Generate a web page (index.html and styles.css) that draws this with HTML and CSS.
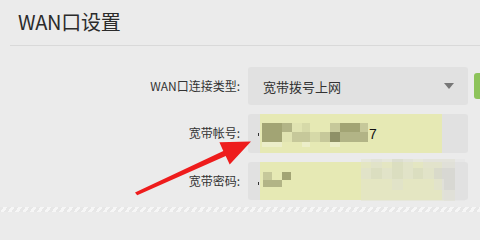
FILE: index.html
```
<!DOCTYPE html>
<html lang="zh-CN">
<head>
<meta charset="utf-8">
<title>WAN口设置</title>
<link rel="stylesheet" href="styles.css">
</head>
<body>
<div class="page">
  <header class="hd"><h1 class="title">WAN口设置</h1></header>
  <div class="form">
    <div class="row">
      <label class="lbl">WAN口连接类型:</label>
      <div class="box select"><span class="val">宽带拨号上网</span><span class="caret"></span></div>
      <div class="btn"></div>
    </div>
    <div class="row">
      <label class="lbl">宽带帐号:</label>
      <div class="box input">
        <div class="pad"><i class="cur"></i></div>
        <div class="fill">
          <div class="mosaic m-acc">
            <b class="d1"></b><b class="d1"></b><b class="m1"></b><b class="l2"></b><b class="l1"></b><b class="y"></b><b class="y"></b><b class="m2"></b><b class="d1"></b><b class="d1"></b><b class="m2"></b>
            <b class="d1"></b><b class="d1"></b><b class="l2"></b><b class="m2"></b><b class="m2"></b><b class="l1"></b><b class="m2"></b><b class="d2"></b><b class="m1"></b><b class="m1"></b><b class="m1"></b>
            <b class="f1"></b><b class="f1"></b><b class="y"></b><b class="y"></b><b class="f1"></b><b class="y"></b><b class="y"></b><b class="f1"></b><b class="y"></b><b class="y"></b><b class="y"></b>
          </div>
          <span class="seven">7</span>
        </div>
      </div>
      <div></div>
    </div>
    <div class="row">
      <label class="lbl">宽带密码:</label>
      <div class="box input">
        <div class="pad"><i class="cur cur2"></i></div>
        <div class="fill">
          <div class="mosaic m-pwd">
            <b class="m2"></b><b class="y"></b><b class="d1"></b>
            <b class="m1 span2"></b><b class="y"></b>
          </div>
        </div>
        <div class="ghost">
          <b class="g1"></b><b class="g2"></b><b class="g1"></b><b class="g3"></b><b class="g2"></b><b class="g1"></b><b class="g4"></b><b class="g4"></b><b class="g4"></b><b class="g0"></b>
          <b class="g2"></b><b class="g3"></b><b class="g2"></b><b class="g3"></b><b class="g2"></b><b class="g3"></b><b class="g2"></b><b class="g5"></b><b class="g5"></b><b class="g0"></b>
          <b class="g1"></b><b class="g1"></b><b class="g1"></b><b class="g2"></b><b class="g1"></b><b class="g1"></b><b class="g1"></b><b class="g4"></b><b class="g5"></b><b class="g0"></b>
          <b class="g1"></b><b class="g1"></b><b class="g1"></b><b class="g1"></b><b class="g1"></b><b class="g1"></b><b class="g1"></b><b class="g1"></b><b class="g4"></b><b class="g0"></b>
        </div>
      </div>
      <div></div>
    </div>
  </div>
  <div class="stripe"></div>
  <svg class="arrow" width="480" height="212" viewBox="0 0 480 212">
    <polygon points="135,192.6 223.3,150.9 219.4,142.2 251,141.6 229.7,164.6 225.7,155.9 137.2,195.2" fill="#ee1c1c"/>
  </svg>
</div>
</body>
</html>
```
FILE: styles.css
```
* { box-sizing: border-box; }
html, body { margin: 0; padding: 0; }
body {
  background: #ebebeb;
  font-family: "Noto Sans CJK SC", "Noto Sans", sans-serif;
  color: #333;
  overflow: hidden;
}
.page {
  position: relative;
  width: 480px;
  height: 212px;
  overflow: hidden;
}
.hd {
  margin-left: 10px;
  height: 46px;
  border-bottom: 1px solid #d9d9d9;
}
.title {
  margin: 0;
  padding-left: 8px;
  font-size: 20px;
  font-weight: 400;
  line-height: 43px;
  color: #2b2b2b;
  letter-spacing: -0.3px;
}
.form {
  padding-top: 21px;
  display: flex;
  flex-direction: column;
  gap: 9px;
}
.row {
  display: grid;
  grid-template-columns: 240px 220px 12px;
  column-gap: 8px;
  height: 38px;
}
.row:nth-child(2) { height: 39px; }
.lbl {
  text-align: right;
  font-size: 12px;
  line-height: 38px;
  color: #333;
}
.box {
  position: relative;
  background: #e1e1e1;
  border-radius: 3px;
  height: 100%;
}
.select {
  display: flex;
  align-items: center;
  justify-content: space-between;
  padding: 0 14px 0 15px;
}
.val { font-size: 13px; color: #333; }
.caret {
  width: 0; height: 0;
  border-left: 5px solid transparent;
  border-right: 5px solid transparent;
  border-top: 6px solid #777;
}
.btn {
  margin-top: 6px;
  margin-left: -2px;
  height: 26px;
  background: #8dc35a;
  border-radius: 3px 0 0 3px;
}
.input { display: flex; }
.pad {
  width: 12px;
  display: flex;
  align-items: center;
  justify-content: flex-end;
  padding-right: 1px;
}
.cur { display: block; width: 1px; height: 3px; background: #333; margin-top: 1px; }
.cur2 { margin-top: 4px; }
.fill {
  width: 182px;
  background: #e6e9b4;
  display: flex;
  align-items: flex-start;
}
.mosaic { display: grid; }
.mosaic b { display: block; }
.m-acc {
  margin: 9px 0 0 2px;
  grid-template-columns: 10px 10px 10px 10px 8px 10px 10px 10px 10px 10px 8px;
  grid-template-rows: 9px 10px 5px;
}
.m-pwd {
  margin: 10px 0 0 3px;
  grid-template-columns: 9px 10px 9px;
  grid-template-rows: 8px 7px;
}
.span2 { grid-column: span 2; }
.seven {
  font-family: "Liberation Sans", sans-serif;
  font-size: 14px;
  line-height: 16px;
  margin: 12px 0 0 1px;
  color: #111;
}
.d1 { background: #a2a474; }
.d2 { background: #8e9067; }
.m1 { background: #b2b486; }
.m2 { background: #c6c89a; }
.l1 { background: #d6d9a8; }
.l2 { background: #e0e3b1; }
.y { background: transparent; }
.f1 { background: #eceec9; }
.ghost {
  position: absolute;
  left: 113px;
  top: -3px;
  width: 104px;
  height: 42px;
  display: grid;
  grid-template-columns: repeat(10, 1fr);
  grid-template-rows: 9px 11px 11px 11px;
}
.ghost b { display: block; }
.g0 { background: rgba(225,225,225,0.4); }
.g1 { background: rgba(226,228,205,0.55); }
.g2 { background: rgba(222,223,208,0.7); }
.g3 { background: rgba(214,216,196,0.7); }
.g4 { background: rgba(224,224,212,0.7); }
.g5 { background: rgba(214,214,208,0.8); }
.stripe {
  position: absolute;
  left: 0; right: 0; bottom: 0;
  height: 5px;
  background: repeating-linear-gradient(-55deg, #f6f6f6 0 3px, #e7e7e7 3px 6px);
}
.arrow {
  position: absolute;
  left: 0; top: 0;
  pointer-events: none;
}
```
